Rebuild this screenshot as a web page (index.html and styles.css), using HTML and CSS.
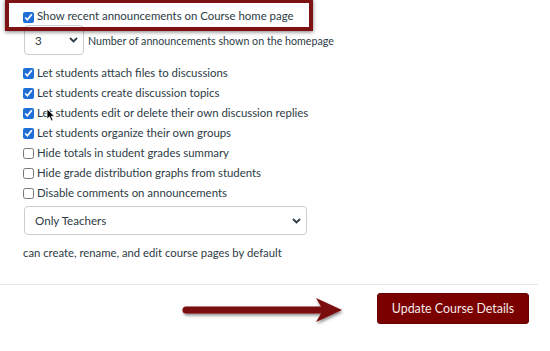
FILE: index.html
```html
<!DOCTYPE html>
<html lang="en">
  <head>
    <meta charset="UTF-8" />
    <meta name="viewport" content="width=device-width, initial-scale=1.0" />
    <title>Course Details</title>
    <link rel="stylesheet" href="styles.css">
  </head>
  <body>
    <div class="page">
      <div class="settings">
        <label class="check-row first-row">
          <input type="checkbox" checked />
          <span>Show recent announcements on Course home page</span>
        </label>

        <div class="select-row">
          <div class="select-wrap small">
            <select>
              <option>3</option>
            </select>
            <svg class="chevron" width="9" height="6" viewBox="0 0 9 6">
              <path d="M1 1 L4.5 4.5 L8 1" fill="none" stroke="#2d3b45" stroke-width="1.8" />
            </svg>
          </div>
          <span class="select-label">Number of announcements shown on the homepage</span>
        </div>

        <div class="check-list">
          <label class="check-row"><input type="checkbox" checked /><span>Let students attach files to discussions</span></label>
          <label class="check-row"><input type="checkbox" checked /><span>Let students create discussion topics</span></label>
          <label class="check-row"><input type="checkbox" checked /><span>Let students edit or delete their own discussion replies</span></label>
          <label class="check-row"><input type="checkbox" checked /><span>Let students organize their own groups</span></label>
          <label class="check-row"><input type="checkbox" /><span>Hide totals in student grades summary</span></label>
          <label class="check-row"><input type="checkbox" /><span>Hide grade distribution graphs from students</span></label>
          <label class="check-row"><input type="checkbox" /><span>Disable comments on announcements</span></label>
        </div>

        <div class="select-wrap wide">
          <select>
            <option>Only Teachers</option>
          </select>
          <svg class="chevron" width="9" height="6" viewBox="0 0 9 6">
            <path d="M1 1 L4.5 4.5 L8 1" fill="none" stroke="#2d3b45" stroke-width="1.8" />
          </svg>
        </div>

        <p class="hint">can create, rename, and edit course pages by default</p>
      </div>

      <div class="footer">
        <button type="submit" class="update-btn">Update Course Details</button>
      </div>
    </div>

    <!-- annotation overlays -->
    <div class="highlight"></div>

    <svg class="arrow" width="170" height="34" viewBox="0 0 170 34">
      <defs>
        <filter id="shadow" x="-10%" y="-40%" width="120%" height="180%">
          <feDropShadow dx="1" dy="2" stdDeviation="1.5" flood-color="#000" flood-opacity="0.45" />
        </filter>
      </defs>
      <g filter="url(#shadow)" fill="#7a0a0b">
        <line x1="6" y1="15" x2="142" y2="15" stroke="#7a0a0b" stroke-width="7" stroke-linecap="round" />
        <polygon points="136,3 162,15 136,27 143,15" />
      </g>
    </svg>

    <svg class="cursor" width="10" height="14" viewBox="0 0 10 14">
      <path d="M1 1 L1 11 L3.5 8.8 L5.3 13 L7 12.2 L5.3 8.2 L8.6 8.2 Z" fill="#000" stroke="#fff" stroke-width="0.8" />
    </svg>
  </body>
</html>
```

FILE: styles.css
```css
body {
  margin: 0;
  background: #fff;
  font-family: Lato, "Open Sans", sans-serif;
  font-size: 11.4px;
  color: #2d3b45;
}
.page {
  width: 538px;
}
.settings {
  padding-left: 23px;
  padding-top: 6px;
}
.check-row {
  display: flex;
  align-items: center;
  height: 20px;
  gap: 3px;
}
.first-row {
  height: 19px;
}
.check-row input {
  width: 11px;
  height: 11px;
  margin: 3px 0 0 0;
  accent-color: #1f6fd6;
}
.select-row {
  display: flex;
  align-items: center;
  gap: 4px;
}
.select-label {
  font-size: 10.7px;
}
.select-wrap {
  position: relative;
  margin-left: 1px;
}
.select-wrap select {
  appearance: none;
  -webkit-appearance: none;
  font-family: inherit;
  font-size: 11.6px;
  color: #2d3b45;
  background: #fff;
  border: 1px solid #c7cdd1;
  border-radius: 4px;
  padding: 0 10px;
  width: 100%;
}
.select-wrap.small {
  width: 60px;
}
.select-wrap.small select {
  height: 30px;
}
.select-wrap.wide {
  width: 283px;
  margin-top: 4px;
}
.select-wrap.wide select {
  height: 29px;
}
.chevron {
  position: absolute;
  right: 6px;
  top: 12px;
  pointer-events: none;
}
.check-list {
  margin-top: 7px;
}
.hint {
  margin: 10px 0 0 0;
  line-height: 16px;
  font-size: 11.3px;
}
.footer {
  margin-top: 23px;
  border-top: 1px solid #e3e5e7;
  display: flex;
  justify-content: flex-end;
  padding: 8px 9px 0 0;
}
.update-btn {
  width: 152px;
  height: 31px;
  padding: 0;
  white-space: nowrap;
  background: #7a0000;
  color: #f4eaea;
  font-family: inherit;
  font-size: 12.4px;
  border: 1px solid #6a0000;
  border-radius: 3px;
  cursor: pointer;
}
.highlight {
  position: absolute;
  left: 5px;
  top: -1px;
  width: 300px;
  height: 24px;
  border: 4px solid #7d1214;
  box-shadow: 0 1px 4px rgba(0, 0, 0, 0.5);
}
.arrow {
  position: absolute;
  left: 180px;
  top: 295px;
}
.cursor {
  position: absolute;
  left: 46px;
  top: 108px;
}
```
